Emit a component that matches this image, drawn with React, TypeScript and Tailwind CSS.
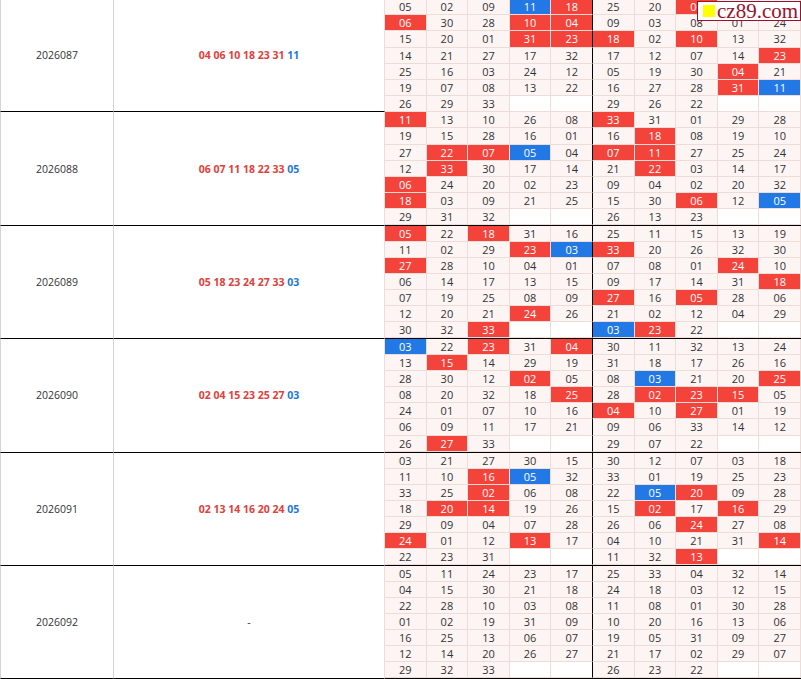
import React from "react";

type Block = {
  period: string;
  red: string[];
  blue: string | null;
  left: string[];
  right: string[];
};

const blocks: Block[] = [
  {
    period: "2026087",
    red: ["04", "06", "10", "18", "23", "31"],
    blue: "11",
    left: [
      "05 02 09 11 18",
      "06 30 28 10 04",
      "15 20 01 31 23",
      "14 21 27 17 32",
      "25 16 03 24 12",
      "19 07 08 13 22",
      "26 29 33",
    ],
    right: [
      "25 20 06 15 33",
      "09 03 08 01 24",
      "18 02 10 13 32",
      "17 12 07 14 23",
      "05 19 30 04 21",
      "16 27 28 31 11",
      "29 26 22",
    ],
  },
  {
    period: "2026088",
    red: ["06", "07", "11", "18", "22", "33"],
    blue: "05",
    left: [
      "11 13 10 26 08",
      "19 15 28 16 01",
      "27 22 07 05 04",
      "12 33 30 17 14",
      "06 24 20 02 23",
      "18 03 09 21 25",
      "29 31 32",
    ],
    right: [
      "33 31 01 29 28",
      "16 18 08 19 10",
      "07 11 27 25 24",
      "21 22 03 14 17",
      "09 04 02 20 32",
      "15 30 06 12 05",
      "26 13 23",
    ],
  },
  {
    period: "2026089",
    red: ["05", "18", "23", "24", "27", "33"],
    blue: "03",
    left: [
      "05 22 18 31 16",
      "11 02 29 23 03",
      "27 28 10 04 01",
      "06 14 17 13 15",
      "07 19 25 08 09",
      "12 20 21 24 26",
      "30 32 33",
    ],
    right: [
      "25 11 15 13 19",
      "33 20 26 32 30",
      "07 08 01 24 10",
      "09 17 14 31 18",
      "27 16 05 28 06",
      "21 02 12 04 29",
      "03 23 22",
    ],
  },
  {
    period: "2026090",
    red: ["02", "04", "15", "23", "25", "27"],
    blue: "03",
    left: [
      "03 22 23 31 04",
      "13 15 14 29 19",
      "28 30 12 02 05",
      "08 20 32 18 25",
      "24 01 07 10 16",
      "06 09 11 17 21",
      "26 27 33",
    ],
    right: [
      "30 11 32 13 24",
      "31 18 17 26 16",
      "08 03 21 20 25",
      "28 02 23 15 05",
      "04 10 27 01 19",
      "09 06 33 14 12",
      "29 07 22",
    ],
  },
  {
    period: "2026091",
    red: ["02", "13", "14", "16", "20", "24"],
    blue: "05",
    left: [
      "03 21 27 30 15",
      "11 10 16 05 32",
      "33 25 02 06 08",
      "18 20 14 19 26",
      "29 09 04 07 28",
      "24 01 12 13 17",
      "22 23 31",
    ],
    right: [
      "30 12 07 03 18",
      "33 01 19 25 23",
      "22 05 20 09 28",
      "15 02 17 16 29",
      "26 06 24 27 08",
      "04 10 21 31 14",
      "11 32 13",
    ],
  },
  {
    period: "2026092",
    red: [],
    blue: null,
    left: [
      "05 11 24 23 17",
      "04 15 30 21 18",
      "22 28 10 03 08",
      "01 02 19 31 09",
      "16 25 13 06 07",
      "12 14 20 26 27",
      "29 32 33",
    ],
    right: [
      "25 33 04 32 14",
      "24 18 03 12 15",
      "11 08 01 30 28",
      "10 20 16 13 06",
      "19 05 31 09 27",
      "21 17 02 29 07",
      "26 23 22",
    ],
  },
];

function pad(row: string) {
  const cells = row.split(" ");
  while (cells.length < 5) cells.push("");
  return cells;
}

function Cell({ n, col, b }: { n: string; col: number; b: Block }) {
  const base =
    "flex items-center justify-center border-b border-r border-[#f0dcd6] leading-none";
  const divider = col === 4 ? " border-r-black" : "";
  let tone = " bg-[#fdf5f3] text-[#333]";
  if (n === "") tone = " bg-white";
  else if (b.red.includes(n)) tone = " bg-[#f4433b] text-white";
  else if (b.blue === n) tone = " bg-[#2279e6] text-white";
  return <div className={base + divider + tone}>{n}</div>;
}

function Grid({ b, first }: { b: Block; first: boolean }) {
  return (
    <div
      className={
        "grid flex-1 grid-cols-10 grid-rows-7 text-[11px] " +
        (first ? "" : "border-b border-black")
      }
    >
      {b.left.map((row, r) => {
        const cells = [...pad(row), ...pad(b.right[r])];
        return cells.map((n, c) => <Cell key={r + "-" + c} n={n} col={c} b={b} />);
      })}
    </div>
  );
}

export default function App() {
  return (
    <div
      className="relative h-[679px] w-[801px] overflow-hidden bg-white"
      style={{ fontFamily: '"Open Sans", "Noto Sans", sans-serif' }}
    >
      <div className="-mt-[1px] flex flex-col">
        {blocks.map((b, i) => (
          <div key={b.period} className="flex h-[113.4px]">
            <div className="flex w-[114px] shrink-0 items-center justify-center border-b border-l border-r border-b-black border-l-[#d4d4d4] border-r-[#d4d4d4] pt-[2px] text-[10.5px] text-[#333]">
              {b.period}
            </div>
            <div className="flex w-[271px] shrink-0 items-center justify-center border-b border-r border-b-black border-r-[#f0dcd6] pt-[2px] text-[10.5px] font-bold">
              {b.red.length === 0 ? (
                <span className="font-normal text-[#333]">-</span>
              ) : (
                <span>
                  <span className="text-[#e2403a]">{b.red.join(" ")}</span>{" "}
                  <span className="text-[#1f78d8]">{b.blue}</span>
                </span>
              )}
            </div>
            <Grid b={b} first={i === 0} />
          </div>
        ))}
      </div>
      <div className="absolute left-[697px] top-[1px] flex h-[20px] w-[104px] items-center gap-[2px] overflow-hidden border border-[#9e0f2a] bg-white pl-[5px]">
        <span className="h-[12px] w-[12px] shrink-0 bg-[#ffff00]" />
        <span
          className="whitespace-nowrap text-[21px] leading-none text-[#9e0f2a]"
          style={{ fontFamily: '"Liberation Serif", serif' }}
        >
          cz89.com
        </span>
      </div>
    </div>
  );
}
